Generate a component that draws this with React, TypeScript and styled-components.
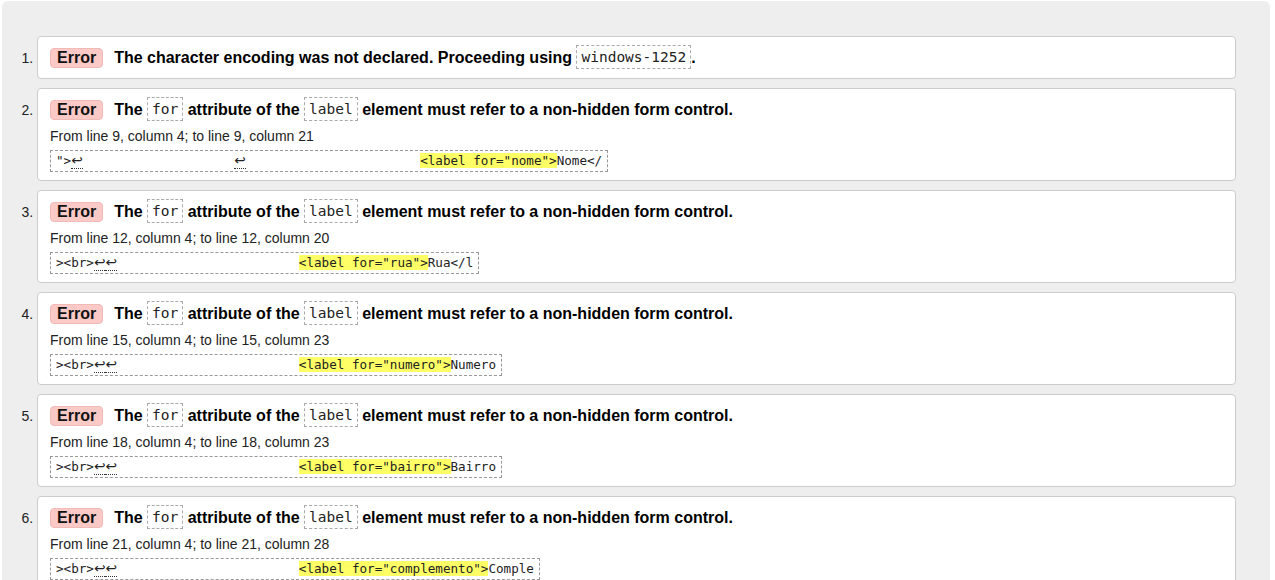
import * as React from 'react';
import styled, { createGlobalStyle } from 'styled-components';

const GlobalStyle = createGlobalStyle`
  html, body {
    margin: 0;
    padding: 0;
    background: #ffffff;
    font-family: "Liberation Sans", Arial, sans-serif;
    color: #000;
  }
`;

const Panel = styled.div`
  margin: 1px 5px 0 2px;
  min-height: 100vh;
  background: #eeeeee;
  border-radius: 6px 6px 0 0;
  padding-top: 35px;
`;

const MessageList = styled.ol`
  margin: 0;
  padding: 0 34px 0 35px;
  font-size: 14px;
  color: #222;
`;

const MessageItem = styled.li`
  background: #ffffff;
  border: 1px solid #cccccc;
  border-radius: 4px;
  margin-bottom: 9px;
  padding: 8px 12px;
`;

const Summary = styled.p`
  margin: 0;
  line-height: 25px;
  font-size: 16px;
  font-weight: bold;
  color: #000;
`;

const Badge = styled.strong`
  display: inline-block;
  background: #fbc9c6;
  border: 1px solid #f1bab6;
  border-radius: 4px;
  padding: 0 6px;
  line-height: 18px;
  margin-right: 11px;
  color: #111;
`;

const Code = styled.code`
  display: inline-block;
  font-family: "DejaVu Sans Mono", "Liberation Mono", monospace;
  font-size: 14.5px;
  font-weight: normal;
  line-height: 22px;
  padding: 0 4px;
  border: 1px dashed #aaaaaa;
  vertical-align: top;
  color: #222;
`;

const Location = styled.p`
  margin: 4px 0 0;
  line-height: 20px;
  font-size: 14px;
  color: #222;
`;

const Extract = styled.p`
  margin: 4px 0 0;
  display: inline-block;
  border: 1px dashed #999999;
  padding: 0 5px;
  font-family: "DejaVu Sans Mono", "Liberation Mono", monospace;
  font-size: 12.6px;
  line-height: 20px;
  white-space: pre;
  color: #222;
`;

const Highlight = styled.mark`
  background: #ffff66;
  color: #222;
`;

const LineFeed = styled.span`
  font-family: "DejaVu Sans", sans-serif;
  font-size: 13.7px;
  line-height: 0;
  border-bottom: 1px dotted #333;
`;

type Entry = {
  location: string;
  before: string;
  mark: string;
  after: string;
};

const forMessage = (
  line: number,
  col: number,
  before: string,
  mark: string,
  after: string
): Entry => ({
  location: `From line ${line}, column 4; to line ${line}, column ${col}`,
  before,
  mark,
  after,
});

const brBefore = '><br>↩↩' + ' '.repeat(24);

const entries: Entry[] = [
  forMessage(9, 21, '">↩' + ' '.repeat(20) + '↩' + ' '.repeat(23), '<label for="nome">', 'Nome</'),
  forMessage(12, 20, brBefore, '<label for="rua">', 'Rua</l'),
  forMessage(15, 23, brBefore, '<label for="numero">', 'Numero'),
  forMessage(18, 23, brBefore, '<label for="bairro">', 'Bairro'),
  forMessage(21, 28, brBefore, '<label for="complemento">', 'Comple'),
];

// every line break in the extract is shown as its own dotted-underlined arrow
function withLineFeeds(text: string): React.ReactNode[] {
  return text.split(/(↩)/).map((p, i) =>
    p === '↩' ? <LineFeed key={i}>{p}</LineFeed> : <React.Fragment key={i}>{p}</React.Fragment>
  );
}

export default function App(): JSX.Element {
  return (
    <>
      <GlobalStyle />
      <Panel>
        <MessageList>
          <MessageItem>
            <Summary>
              <Badge>Error</Badge>
              The character encoding was not declared. Proceeding using <Code>windows-1252</Code>.
            </Summary>
          </MessageItem>
          {entries.map((e, i) => (
            <MessageItem key={i}>
              <Summary>
                <Badge>Error</Badge>
                The <Code>for</Code> attribute of the <Code>label</Code> element must refer to a
                non-hidden form control.
              </Summary>
              <Location>{e.location}</Location>
              <Extract>
                {withLineFeeds(e.before)}
                <Highlight>{e.mark}</Highlight>
                {e.after}
              </Extract>
            </MessageItem>
          ))}
        </MessageList>
      </Panel>
    </>
  );
}
